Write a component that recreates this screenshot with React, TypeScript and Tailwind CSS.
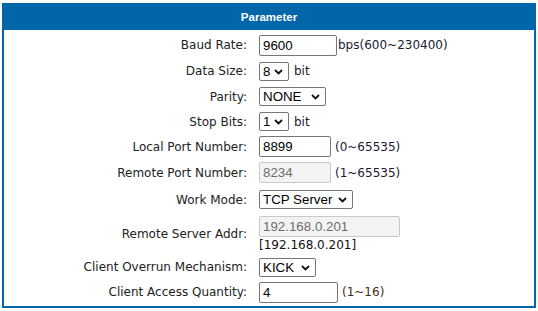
import { ReactNode } from 'react'

const labelFont = { fontFamily: '"DejaVu Sans", Verdana, sans-serif' }
const ctrlFont = { fontFamily: '"Liberation Sans", Arial, sans-serif' }

function Row({ label, h, children }: { label: string; h: string; children: ReactNode }) {
  return (
    <div className={`flex items-center ${h}`}>
      <div className="w-[243px] shrink-0 text-right text-[12px] text-[#222]" style={labelFont}>
        {label}
      </div>
      <div className="ml-[12px] flex items-center text-[12px] text-[#1a1a33]" style={labelFont}>
        {children}
      </div>
    </div>
  )
}

function TextBox({ value, w, disabled }: { value: string; w: string; disabled?: boolean }) {
  return (
    <input
      readOnly
      disabled={disabled}
      value={value}
      className={`${w} h-[21px] rounded-[2px] border px-[3px] text-[13.33px] outline-none ${
        disabled ? 'border-[#c8c8c8] bg-[#f3f3f3] text-[#6d6d6d]' : 'border-[#767676] bg-white text-black'
      }`}
      style={ctrlFont}
    />
  )
}

function Select({ value, w }: { value: string; w: string }) {
  return (
    <div className={`relative ${w} h-[19px] rounded-[2px] border border-[#767676] bg-white`}>
      <span className="absolute left-[3px] top-[0px] text-[13.33px] leading-[17px] text-black" style={ctrlFont}>
        {value}
      </span>
      <svg className="absolute right-[5px] top-[6px]" width="9" height="6" viewBox="0 0 9 6">
        <polyline points="1,1 4.5,4.5 8,1" fill="none" stroke="#111" strokeWidth="1.8" />
      </svg>
    </div>
  )
}

export default function App() {
  return (
    <div className="h-[311px] w-[538px] bg-white pl-[2px] pt-[3px]">
      <div className="h-[305px] w-[534px] border-2 border-[#0066aa]">
        <div
          className="flex h-[25px] items-center justify-center bg-[#0066aa] text-[11.5px] font-bold text-white"
          style={ctrlFont}
        >
          Parameter
        </div>
        <div className="py-[2px]">
          <Row label="Baud Rate:" h="h-[26px]">
            <TextBox value="9600" w="w-[78px]" />
            <span className="ml-[1px]">bps(600~230400)</span>
          </Row>
          <Row label="Data Size:" h="h-[26px]">
            <Select value="8" w="w-[30px]" />
            <span className="ml-[5px]">bit</span>
          </Row>
          <Row label="Parity:" h="h-[25px]">
            <Select value="NONE" w="w-[67px]" />
          </Row>
          <Row label="Stop Bits:" h="h-[25px]">
            <Select value="1" w="w-[30px]" />
            <span className="ml-[5px]">bit</span>
          </Row>
          <Row label="Local Port Number:" h="h-[25px]">
            <TextBox value="8899" w="w-[72px]" />
            <span className="ml-[4px]">(0~65535)</span>
          </Row>
          <Row label="Remote Port Number:" h="h-[27px]">
            <TextBox value="8234" w="w-[72px]" disabled />
            <span className="ml-[4px]">(1~65535)</span>
          </Row>
          <Row label="Work Mode:" h="h-[27px]">
            <Select value="TCP Server" w="w-[94px]" />
          </Row>
          <Row label="Remote Server Addr:" h="h-[41px]">
            <div className="flex flex-col">
              <TextBox value="192.168.0.201" w="w-[141px]" disabled />
              <span className="mt-[1px] leading-[14px] text-[#111]">[192.168.0.201]</span>
            </div>
          </Row>
          <Row label="Client Overrun Mechanism:" h="h-[26px]">
            <Select value="KICK" w="w-[57px]" />
          </Row>
          <Row label="Client Access Quantity:" h="h-[24px]">
            <TextBox value="4" w="w-[79px]" />
            <span className="ml-[4px] text-[#4a2a10]">(1~16)</span>
          </Row>
        </div>
      </div>
    </div>
  )
}
